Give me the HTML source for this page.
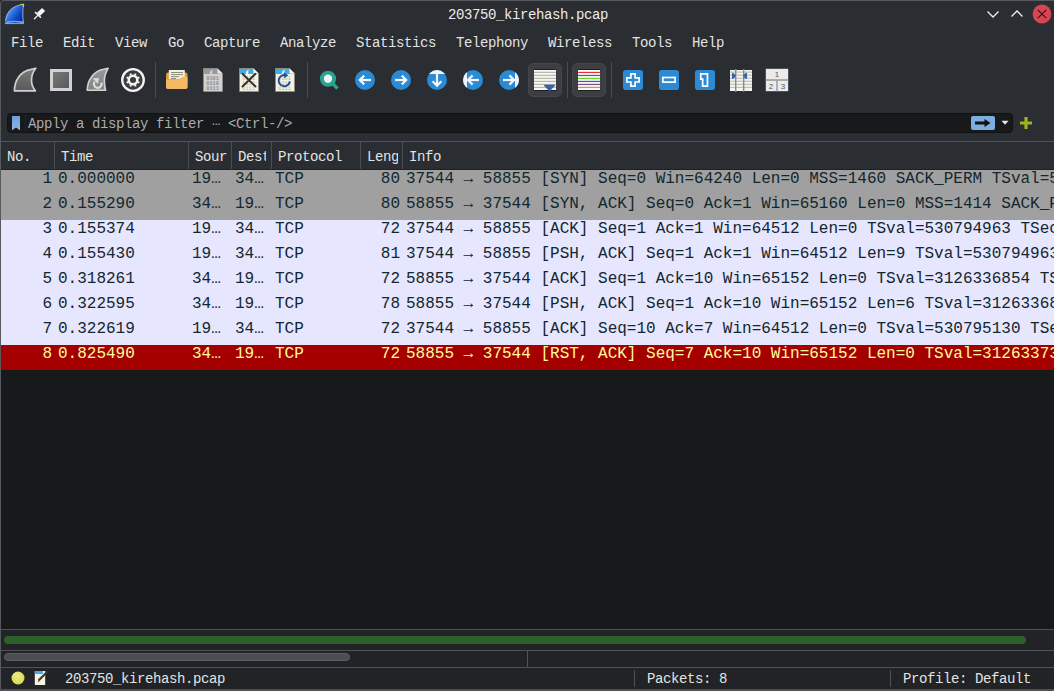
<!DOCTYPE html>
<html><head><meta charset="utf-8"><style>
*{margin:0;padding:0;box-sizing:border-box}
html,body{width:1054px;height:691px;overflow:hidden;background:#2a2d31}
body{position:relative;font-family:"Liberation Mono",monospace;font-size:14px;letter-spacing:-0.4px;color:#e3e3e3}
.a{position:absolute;display:block}
.t{position:absolute;white-space:pre;line-height:16px}
.hsep{position:absolute;top:142px;width:1px;height:27px;background:#4a4d52}
.row{position:absolute;left:1px;width:1053px;height:25px;font-size:16px;letter-spacing:0;line-height:20px;white-space:pre;overflow:hidden}
.row span{position:absolute;top:-1px}
.r1{background:#a0a0a0;color:#12272e}
.r2{background:#e7e6ff;color:#12272e}
.r3{background:#a40000;color:#fffc9c}
</style></head><body>
<div class="a" style="left:0;top:0;width:1060px;height:700px;border:1px solid #56595d;border-radius:4px 4px 0 0;background:#2a2d31"></div>
<svg class="a" style="left:4px;top:3px" width="22" height="22" viewBox="0 0 22 22" ><defs><linearGradient id="sg" x1="0.1" y1="0.2" x2="0.9" y2="0.8"><stop offset="0" stop-color="#7ab8ff"/><stop offset="0.35" stop-color="#2f78e8"/><stop offset="0.75" stop-color="#0a42b8"/><stop offset="1" stop-color="#08389e"/></linearGradient></defs>
<path d="M1.3 20.6 C1.4 10.5 6.5 3 19.6 1.2 C18.6 6.5 18.4 13 19.6 20.6 Z" fill="url(#sg)" stroke="#c8d8f0" stroke-width="0.7"/>
<path d="M2.4 19.4 Q10 17.6 19 19.4" stroke="#7f9fdf" stroke-width="1.6" fill="none"/>
<path d="M16.6 1.5 L19.7 1.3 L19.5 4" stroke="#e8e020" stroke-width="1" fill="none"/>
<path d="M1.4 17.8 L1.6 19.6" stroke="#e02020" stroke-width="1"/></svg>
<svg class="a" style="left:32px;top:6px" width="16" height="16" viewBox="0 0 16 16" ><g stroke="#f4f4f4" stroke-linecap="round" fill="none">
<path d="M6.4 8.6 L11.6 3.4" stroke-width="4.3" stroke-linecap="butt"/>
<path d="M3.4 6.4 L8.5 11.3" stroke-width="1.5"/>
<path d="M5.6 9.6 L2.4 12.8" stroke-width="1.3"/></g></svg>
<div class="t" style="left:1px;width:1054px;text-align:center;top:7px;color:#ececec">203750_kirehash.pcap</div>
<svg class="a" style="left:984px;top:6px" width="18" height="16" viewBox="0 0 18 16" ><path d="M3.5 5.5 L9 11 L14.5 5.5" stroke="#f0f0f0" stroke-width="1.3" fill="none"/></svg>
<svg class="a" style="left:1008px;top:6px" width="18" height="16" viewBox="0 0 18 16" ><path d="M3.5 10.5 L9 5 L14.5 10.5" stroke="#f0f0f0" stroke-width="1.3" fill="none"/></svg>
<svg class="a" style="left:1030px;top:3px" width="24" height="22" viewBox="0 0 24 22" ><circle cx="12" cy="11" r="9.4" fill="#da4453"/><path d="M7.8 6.8 L16.2 15.2 M16.2 6.8 L7.8 15.2" stroke="#2a1a1e" stroke-width="1.2"/></svg>
<div class="t" style="left:11px;top:35px">File</div>
<div class="t" style="left:63px;top:35px">Edit</div>
<div class="t" style="left:115px;top:35px">View</div>
<div class="t" style="left:168px;top:35px">Go</div>
<div class="t" style="left:204px;top:35px">Capture</div>
<div class="t" style="left:280px;top:35px">Analyze</div>
<div class="t" style="left:356px;top:35px">Statistics</div>
<div class="t" style="left:456px;top:35px">Telephony</div>
<div class="t" style="left:548px;top:35px">Wireless</div>
<div class="t" style="left:632px;top:35px">Tools</div>
<div class="t" style="left:692px;top:35px">Help</div>
<svg class="a" style="left:13px;top:67px" width="24" height="25" viewBox="0 0 24 25" ><defs><linearGradient id="fg1" x1="0" y1="0" x2="0" y2="1"><stop offset="0" stop-color="#7a7a7a"/><stop offset="1" stop-color="#5a5a5a"/></linearGradient></defs><path d="M1.4 23.8 C1.6 13.5 7 4.5 18.2 2.4 L22.8 1.2 C19.4 5.5 18.4 9.5 18.5 13.5 C18.6 17.5 20 21 22.4 23.8 Z" fill="url(#fg1)" stroke="#cfcfcf" stroke-width="1.7" stroke-linejoin="round"/></svg>
<svg class="a" style="left:50px;top:69px" width="22" height="22" viewBox="0 0 22 22" ><defs><linearGradient id="stg" x1="0" y1="0" x2="1" y2="1"><stop offset="0" stop-color="#7a7a7a"/><stop offset="1" stop-color="#585858"/></linearGradient></defs><rect x="1.5" y="1.5" width="19" height="19" fill="url(#stg)" stroke="#d2d2d6" stroke-width="3"/></svg>
<svg class="a" style="left:85px;top:67px" width="24" height="25" viewBox="0 0 24 25" ><defs><linearGradient id="fg2" x1="0" y1="0" x2="0" y2="1"><stop offset="0" stop-color="#9a9a9a"/><stop offset="1" stop-color="#828282"/></linearGradient></defs><path d="M2.2 23.3 C2.4 13.5 8 4.5 18.5 2.3 L23.2 1.2 C20.5 6 19.3 10 19.4 14 C19.5 18 19.8 21 20.6 23.3 Z" fill="url(#fg2)" stroke="#d2d2d2" stroke-width="1.6" stroke-linejoin="round"/><path d="M9.6 14.6 A3.9 3.9 0 1 0 16.4 15.6" stroke="#dcdcdc" stroke-width="2.3" fill="none"/><path d="M7.6 11.4 L14 10.9 L13 17 Z" fill="#dcdcdc"/></svg>
<svg class="a" style="left:121px;top:68px" width="24" height="24" viewBox="0 0 24 24" ><circle cx="12" cy="12" r="10.8" fill="#3c3c3c" stroke="#f4f4f4" stroke-width="2.3"/><rect x="11.05" y="5" width="1.9" height="1.9" rx="0.3" fill="#f4f4f4" transform="rotate(22.5 12 12)"/><rect x="11.05" y="5" width="1.9" height="1.9" rx="0.3" fill="#f4f4f4" transform="rotate(67.5 12 12)"/><rect x="11.05" y="5" width="1.9" height="1.9" rx="0.3" fill="#f4f4f4" transform="rotate(112.5 12 12)"/><rect x="11.05" y="5" width="1.9" height="1.9" rx="0.3" fill="#f4f4f4" transform="rotate(157.5 12 12)"/><rect x="11.05" y="5" width="1.9" height="1.9" rx="0.3" fill="#f4f4f4" transform="rotate(202.5 12 12)"/><rect x="11.05" y="5" width="1.9" height="1.9" rx="0.3" fill="#f4f4f4" transform="rotate(247.5 12 12)"/><rect x="11.05" y="5" width="1.9" height="1.9" rx="0.3" fill="#f4f4f4" transform="rotate(292.5 12 12)"/><rect x="11.05" y="5" width="1.9" height="1.9" rx="0.3" fill="#f4f4f4" transform="rotate(337.5 12 12)"/><circle cx="12" cy="12" r="4.3" fill="none" stroke="#f4f4f4" stroke-width="2.5"/></svg>
<div class="a" style="left:155px;top:62px;width:1px;height:36px;background:#4a4d52"></div>
<div class="a" style="left:307px;top:62px;width:1px;height:36px;background:#4a4d52"></div>
<div class="a" style="left:567px;top:62px;width:1px;height:36px;background:#4a4d52"></div>
<div class="a" style="left:611px;top:62px;width:1px;height:36px;background:#4a4d52"></div>
<svg class="a" style="left:165px;top:69px" width="24" height="21" viewBox="0 0 24 21" ><path d="M1 5.5 Q1 3.5 3 3.5 L20.5 3.5 Q22.5 3.5 22.5 5.5 L22.5 18 Q22.5 20 20.5 20 L3 20 Q1 20 1 18 Z" fill="#e49a3a"/>
<rect x="3.8" y="1" width="16" height="9" fill="#f2f0de"/>
<g stroke="#8a8a7a" stroke-width="1"><path d="M6 3.5 H18 M6 5.6 H18 M6 7.7 H14 M6 9.6 H11"/></g>
<path d="M1 10.6 L11 10.6 Q14 10.6 15.5 9 Q17 7.4 19 7.4 L21 7.4 Q22.5 7.4 22.5 9 L22.5 18 Q22.5 20 20.5 20 L3 20 Q1 20 1 18 Z" fill="#f2b962"/></svg>
<svg class="a" style="left:203px;top:68px" width="20" height="24" viewBox="0 0 20 24" ><path d="M0.5 0.5 L14.5 0.5 L19.5 5.5 L19.5 23.5 L0.5 23.5 Z" fill="#cfd1d5" stroke="#8c8c84" stroke-width="0.8"/>
<path d="M1 1 L14.3 1 L19 5.7 L19 6 L1 6 Z" fill="#9a9a9a"/>
<path d="M14.5 0.5 L14.5 5.5 L19.5 5.5 Z" fill="#e8e8e8"/>
<path d="M7 6 C6.5 3.5 8.5 1.8 10 1.5 C9 3 9 4.5 9.5 6 Z" fill="#cfd1d5"/>
<g font-family="Liberation Mono" font-size="5.2" font-weight="bold" fill="#8c8c8c" letter-spacing="0"><text x="3.3" y="11.5">0101</text><text x="3.3" y="16.5">0110</text><text x="3.3" y="21.5">0111</text></g></svg>
<svg class="a" style="left:239px;top:68px" width="20" height="24" viewBox="0 0 20 24" ><path d="M0.5 0.5 L14.5 0.5 L19.5 5.5 L19.5 23.5 L0.5 23.5 Z" fill="#f4f2e2" stroke="#8c8c84" stroke-width="0.8"/>
<path d="M1 1 L14.3 1 L19 5.7 L19 6 L1 6 Z" fill="#3daee9"/>
<path d="M14.5 0.5 L14.5 5.5 L19.5 5.5 Z" fill="#ffffff"/>
<path d="M7 6 C6.5 3.5 8.5 1.8 10 1.5 C9 3 9 4.5 9.5 6 Z" fill="#f4f2e2"/>
<g font-family="Liberation Mono" font-size="5.2" font-weight="normal" fill="#b4b4ac" letter-spacing="0"><text x="3.3" y="11.5">0101</text><text x="3.3" y="16.5">0110</text><text x="3.3" y="21.5">0111</text></g><path d="M3.5 5.8 L16.5 18.5 M16.5 5.8 L3.5 18.5" stroke="#303030" stroke-width="1.9" stroke-linecap="round"/></svg>
<svg class="a" style="left:275px;top:68px" width="20" height="24" viewBox="0 0 20 24" ><path d="M0.5 0.5 L14.5 0.5 L19.5 5.5 L19.5 23.5 L0.5 23.5 Z" fill="#f4f2e2" stroke="#8c8c84" stroke-width="0.8"/>
<path d="M1 1 L14.3 1 L19 5.7 L19 6 L1 6 Z" fill="#3daee9"/>
<path d="M14.5 0.5 L14.5 5.5 L19.5 5.5 Z" fill="#ffffff"/>
<path d="M7 6 C6.5 3.5 8.5 1.8 10 1.5 C9 3 9 4.5 9.5 6 Z" fill="#f4f2e2"/>
<g font-family="Liberation Mono" font-size="5.2" font-weight="normal" fill="#b4b4ac" letter-spacing="0"><text x="3.3" y="11.5">0101</text><text x="3.3" y="16.5">0110</text><text x="3.3" y="21.5">0111</text></g><path d="M14.8 13.5 A5.6 5.6 0 1 1 10.5 7.2" stroke="#1b4f9c" stroke-width="1.9" fill="none"/><path d="M8.8 4.6 L13.3 7.3 L9.3 10.2 Z" fill="#1b4f9c"/></svg>
<svg class="a" style="left:318px;top:69px" width="22" height="22" viewBox="0 0 22 22" ><path d="M15 15 L19.5 19.5" stroke="#2ba393" stroke-width="3.2" stroke-linecap="butt"/><circle cx="10" cy="9.7" r="6.1" fill="#eaf4f2" stroke="#2ba393" stroke-width="3.9"/></svg>
<svg class="a" style="left:354px;top:69px" width="22" height="22" viewBox="0 0 22 22" ><circle cx="11" cy="11" r="10" fill="#2b8ad4"/><path d="M5.8 11 H17" stroke="#f2f6fa" stroke-width="2.2"/><path d="M10.2 6.6 L5.8 11 L10.2 15.4" stroke="#f2f6fa" stroke-width="2.2" fill="none"/></svg>
<svg class="a" style="left:390px;top:69px" width="22" height="22" viewBox="0 0 22 22" ><circle cx="11" cy="11" r="10" fill="#2b8ad4"/><path d="M5 11 H16.2" stroke="#f2f6fa" stroke-width="2.2"/><path d="M11.8 6.6 L16.2 11 L11.8 15.4" stroke="#f2f6fa" stroke-width="2.2" fill="none"/></svg>
<svg class="a" style="left:426px;top:69px" width="22" height="22" viewBox="0 0 22 22" ><defs><clipPath id="c1"><circle cx="11" cy="11" r="10"/></clipPath></defs><circle cx="11" cy="11" r="10" fill="#2b8ad4"/><rect x="0" y="0" width="22" height="5" fill="#eef4fa" clip-path="url(#c1)"/><path d="M11 5 V16.5" stroke="#f2f6fa" stroke-width="2.2"/><path d="M6.6 12.2 L11 16.6 L15.4 12.2" stroke="#f2f6fa" stroke-width="2.2" fill="none"/></svg>
<svg class="a" style="left:462px;top:69px" width="22" height="22" viewBox="0 0 22 22" ><defs><clipPath id="c2"><circle cx="11" cy="11" r="10"/></clipPath></defs><circle cx="11" cy="11" r="10" fill="#2b8ad4"/><rect x="0" y="0" width="5" height="22" fill="#eef4fa" clip-path="url(#c2)"/><path d="M6 11 H17" stroke="#f2f6fa" stroke-width="2.2"/><path d="M10.6 6.4 L6 11 L10.6 15.6" stroke="#f2f6fa" stroke-width="2.3" fill="none"/></svg>
<svg class="a" style="left:498px;top:69px" width="22" height="22" viewBox="0 0 22 22" ><defs><clipPath id="c3"><circle cx="11" cy="11" r="10"/></clipPath></defs><circle cx="11" cy="11" r="10" fill="#2b8ad4"/><rect x="17" y="0" width="5" height="22" fill="#eef4fa" clip-path="url(#c3)"/><path d="M5 11 H16" stroke="#f2f6fa" stroke-width="2.2"/><path d="M11.4 6.4 L16 11 L11.4 15.6" stroke="#f2f6fa" stroke-width="2.3" fill="none"/></svg>
<div class="a" style="left:528px;top:63px;width:34px;height:34px;border-radius:5px;background:#3c3e43;border:1px solid #44464b"></div>
<div class="a" style="left:572px;top:63px;width:34px;height:34px;border-radius:5px;background:#3c3e43;border:1px solid #44464b"></div>
<svg class="a" style="left:533px;top:69px" width="24" height="23" viewBox="0 0 24 23" ><rect x="1" y="0.8" width="22" height="20.4" fill="#f6f6f2"/><rect x="1" y="0" width="22" height="1" fill="#1e1f20"/><rect x="1" y="21" width="22" height="1" fill="#1e1f20"/><rect x="1" y="2.80" width="22" height="1.1" fill="#b3b3a6"/><rect x="1" y="5.82" width="22" height="1.1" fill="#b3b3a6"/><rect x="1" y="8.84" width="22" height="1.1" fill="#b3b3a6"/><rect x="1" y="11.86" width="22" height="1.1" fill="#b3b3a6"/><rect x="1" y="14.88" width="22" height="1.1" fill="#b3b3a6"/><rect x="1" y="17.90" width="22" height="1.1" fill="#b3b3a6"/><path d="M11.6 16.4 L21.4 16.4 L16.5 21.6 Z" fill="#3465b0" stroke="#3465b0" stroke-width="1.3" stroke-linejoin="round"/></svg>
<svg class="a" style="left:577px;top:69px" width="24" height="23" viewBox="0 0 24 23" ><rect x="1" y="0.8" width="22" height="20.4" fill="#f8fafa"/><rect x="1" y="0" width="22" height="1" fill="#1e1f20"/><rect x="1" y="21" width="22" height="1" fill="#1e1f20"/><rect x="1" y="2.85" width="22" height="1.2" fill="#e83232"/><rect x="1" y="5.85" width="22" height="1.2" fill="#3565b0"/><rect x="1" y="8.85" width="22" height="1.2" fill="#70d020"/><rect x="1" y="11.85" width="22" height="1.2" fill="#3565b0"/><rect x="1" y="14.85" width="22" height="1.2" fill="#804a90"/><rect x="1" y="17.85" width="22" height="1.2" fill="#c8a010"/></svg>
<svg class="a" style="left:623px;top:70px" width="20" height="20" viewBox="0 0 20 20" ><rect x="0" y="0" width="20" height="20" rx="2.8" fill="#2c8ad5"/><path d="M7.9 3.8 H12.1 V7.9 H16.1 V12 H12.1 V16.1 H7.9 V12 H3.8 V7.9 H7.9 Z" fill="none" stroke="#fff" stroke-width="1.7"/></svg>
<svg class="a" style="left:659px;top:70px" width="20" height="20" viewBox="0 0 20 20" ><rect x="0" y="0" width="20" height="20" rx="2.8" fill="#2c8ad5"/><rect x="3.8" y="7.5" width="12.3" height="4.6" fill="none" stroke="#fff" stroke-width="1.7"/></svg>
<svg class="a" style="left:695px;top:70px" width="20" height="20" viewBox="0 0 20 20" ><rect x="0" y="0" width="20" height="20" rx="2.8" fill="#2c8ad5"/><path d="M5.75 3.85 H12.45 V16.05 H7.65 V9.15 H5.75 Z" fill="none" stroke="#fff" stroke-width="1.7"/></svg>
<svg class="a" style="left:730px;top:69px" width="22" height="23" viewBox="0 0 22 23" ><rect x="0" y="1" width="22" height="21" fill="#f4f4f0"/><rect x="0" y="2.60" width="22" height="1" fill="#b8b8aa"/><rect x="0" y="5.65" width="22" height="1" fill="#b8b8aa"/><rect x="0" y="8.70" width="22" height="1" fill="#b8b8aa"/><rect x="0" y="11.75" width="22" height="1" fill="#b8b8aa"/><rect x="0" y="14.80" width="22" height="1" fill="#b8b8aa"/><rect x="0" y="17.85" width="22" height="1" fill="#b8b8aa"/><rect x="5" y="0" width="1.4" height="23" fill="#8a8a84"/><rect x="13" y="0" width="1.4" height="23" fill="#8a8a84"/><path d="M2.6 4.3 L5.4 6.8 L2.6 9.4 Z" fill="#3565b0" stroke="#3565b0" stroke-width="1.3" stroke-linejoin="round"/><path d="M16.4 4.3 L13.6 6.8 L16.4 9.4 Z" fill="#3565b0" stroke="#3565b0" stroke-width="1.3" stroke-linejoin="round"/></svg>
<svg class="a" style="left:765px;top:68px" width="24" height="24" viewBox="0 0 24 24" ><rect x="0.8" y="0.8" width="22.4" height="22.4" fill="#ebebeb"/><rect x="0.8" y="11.2" width="22.4" height="1.6" fill="#9c9c9c"/><rect x="11.3" y="12" width="1.5" height="11.2" fill="#9c9c9c"/><g font-family="Liberation Sans" font-size="8" fill="#555" text-anchor="middle" letter-spacing="0"><text x="12" y="9">1</text><text x="6" y="20.6">2</text><text x="18" y="20.6">3</text></g></svg>
<div class="a" style="left:7px;top:113px;width:1006px;height:20px;background:#18191b;border:1px solid #111213;border-radius:4px"></div>
<div class="a" style="left:25px;top:114px;width:1px;height:18px;background:#202224"></div>
<svg class="a" style="left:11px;top:115px" width="10" height="16" viewBox="0 0 10 16" ><defs><linearGradient id="bm" x1="0" y1="0" x2="0" y2="1"><stop offset="0" stop-color="#6e9ed8"/><stop offset="1" stop-color="#8cb8e8"/></linearGradient></defs><path d="M1 1 H9 V15.2 L5 12.6 L1 15.2 Z" fill="url(#bm)"/></svg>
<div class="t" style="left:28px;top:116px;color:#ababab">Apply a display filter <span style="position:relative;top:-3px">…</span> &lt;Ctrl-/&gt;</div>
<svg class="a" style="left:971px;top:116px" width="24" height="14" viewBox="0 0 24 14" ><rect x="0" y="0" width="24" height="14" rx="2" fill="#7eaee0"/><path d="M4 7 H15" stroke="#111" stroke-width="3"/><path d="M13.5 3 L19.5 7 L13.5 11 Z" fill="#111"/></svg>
<svg class="a" style="left:1001px;top:120px" width="8" height="6" viewBox="0 0 8 6" ><path d="M0.5 0.8 L7.5 0.8 L4 4.8 Z" fill="#e8e8e8"/></svg>
<svg class="a" style="left:1019px;top:116px" width="14" height="14" viewBox="0 0 14 14" ><path d="M7 1 V13 M1 7 H13" stroke="#a0b41e" stroke-width="3.2"/></svg>
<div class="a" style="left:1px;top:141px;width:1053px;height:1px;background:#505357"></div>
<div class="hsep" style="left:54px"></div>
<div class="hsep" style="left:188px"></div>
<div class="hsep" style="left:231px"></div>
<div class="hsep" style="left:271px"></div>
<div class="hsep" style="left:360px"></div>
<div class="hsep" style="left:402px"></div>
<div class="a" style="left:1px;top:169px;width:1053px;height:1px;background:#1f2124"></div>
<div class="t" style="left:7px;top:149px;">No.</div>
<div class="t" style="left:61px;top:149px;">Time</div>
<div class="t" style="left:195px;top:149px;width:32px;overflow:hidden;">Source</div>
<div class="t" style="left:238px;top:149px;width:28px;overflow:hidden;">Destination</div>
<div class="t" style="left:278px;top:149px;">Protocol</div>
<div class="t" style="left:367px;top:149px;width:31px;overflow:hidden;">Length</div>
<div class="t" style="left:409px;top:149px;">Info</div>
<div class="a" style="left:1px;top:370px;width:1053px;height:259px;background:#18191b"></div>
<div class="row r1" style="top:170px"><span style="left:10px;width:41px;text-align:right">1</span><span style="left:57px">0.000000</span><span style="left:191px">19…</span><span style="left:234px">34…</span><span style="left:274px">TCP</span><span style="left:350px;width:49px;text-align:right">80</span><span style="left:405px">37544 → 58855 [SYN] Seq=0 Win=64240 Len=0 MSS=1460 SACK_PERM TSval=530794808 TSecr=0 WS=128</span></div>
<div class="row r1" style="top:195px"><span style="left:10px;width:41px;text-align:right">2</span><span style="left:57px">0.155290</span><span style="left:191px">34…</span><span style="left:234px">19…</span><span style="left:274px">TCP</span><span style="left:350px;width:49px;text-align:right">80</span><span style="left:405px">58855 → 37544 [SYN, ACK] Seq=0 Ack=1 Win=65160 Len=0 MSS=1414 SACK_PERM TSval=3126336690</span></div>
<div class="row r2" style="top:220px"><span style="left:10px;width:41px;text-align:right">3</span><span style="left:57px">0.155374</span><span style="left:191px">19…</span><span style="left:234px">34…</span><span style="left:274px">TCP</span><span style="left:350px;width:49px;text-align:right">72</span><span style="left:405px">37544 → 58855 [ACK] Seq=1 Ack=1 Win=64512 Len=0 TSval=530794963 TSecr=3126336690</span></div>
<div class="row r2" style="top:245px"><span style="left:10px;width:41px;text-align:right">4</span><span style="left:57px">0.155430</span><span style="left:191px">19…</span><span style="left:234px">34…</span><span style="left:274px">TCP</span><span style="left:350px;width:49px;text-align:right">81</span><span style="left:405px">37544 → 58855 [PSH, ACK] Seq=1 Ack=1 Win=64512 Len=9 TSval=530794963 TSecr=3126336690</span></div>
<div class="row r2" style="top:270px"><span style="left:10px;width:41px;text-align:right">5</span><span style="left:57px">0.318261</span><span style="left:191px">34…</span><span style="left:234px">19…</span><span style="left:274px">TCP</span><span style="left:350px;width:49px;text-align:right">72</span><span style="left:405px">58855 → 37544 [ACK] Seq=1 Ack=10 Win=65152 Len=0 TSval=3126336854 TSecr=530794963</span></div>
<div class="row r2" style="top:295px"><span style="left:10px;width:41px;text-align:right">6</span><span style="left:57px">0.322595</span><span style="left:191px">34…</span><span style="left:234px">19…</span><span style="left:274px">TCP</span><span style="left:350px;width:49px;text-align:right">78</span><span style="left:405px">58855 → 37544 [PSH, ACK] Seq=1 Ack=10 Win=65152 Len=6 TSval=3126336858 TSecr=530794963</span></div>
<div class="row r2" style="top:320px"><span style="left:10px;width:41px;text-align:right">7</span><span style="left:57px">0.322619</span><span style="left:191px">19…</span><span style="left:234px">34…</span><span style="left:274px">TCP</span><span style="left:350px;width:49px;text-align:right">72</span><span style="left:405px">37544 → 58855 [ACK] Seq=10 Ack=7 Win=64512 Len=0 TSval=530795130 TSecr=3126336858</span></div>
<div class="row r3" style="top:345px"><span style="left:10px;width:41px;text-align:right">8</span><span style="left:57px">0.825490</span><span style="left:191px">34…</span><span style="left:234px">19…</span><span style="left:274px">TCP</span><span style="left:350px;width:49px;text-align:right">72</span><span style="left:405px">58855 → 37544 [RST, ACK] Seq=7 Ack=10 Win=65152 Len=0 TSval=3126337361 TSecr=530795130</span></div>
<div class="a" style="left:1px;top:629px;width:1053px;height:1px;background:#4f5256"></div>
<div class="a" style="left:1px;top:630px;width:1053px;height:20px;background:#212326"></div>
<div class="a" style="left:4px;top:636px;width:1022px;height:8px;border-radius:4px;background:#2d5f2a"></div>
<div class="a" style="left:1px;top:650px;width:1053px;height:1px;background:#4f5256"></div>
<div class="a" style="left:1px;top:651px;width:1053px;height:16px;background:#212326"></div>
<div class="a" style="left:4px;top:653px;width:346px;height:8px;border-radius:4px;background:#4a4d51;border:1px solid #5c5f63"></div>
<div class="a" style="left:527px;top:651px;width:1px;height:16px;background:#4f5256"></div>
<div class="a" style="left:1px;top:667px;width:1053px;height:1px;background:#4f5256"></div>
<div class="a" style="left:1px;top:668px;width:1053px;height:22px;background:#212326"></div>
<div class="a" style="left:0;top:689px;width:1054px;height:2px;background:#4d5054"></div>
<svg class="a" style="left:11px;top:671px" width="14" height="14" viewBox="0 0 14 14" ><defs><radialGradient id="yg" cx="0.45" cy="0.35" r="0.7"><stop offset="0" stop-color="#ecea8a"/><stop offset="1" stop-color="#d8d64a"/></radialGradient></defs><circle cx="7" cy="7" r="6.5" fill="url(#yg)"/></svg>
<svg class="a" style="left:34px;top:670px" width="15" height="16" viewBox="0 0 15 16" ><rect x="0.8" y="1" width="10.4" height="14" fill="#f4f2e2"/><rect x="0.8" y="1" width="8" height="3" fill="#3daee9"/><path d="M4.5 10.5 L13.5 1.5" stroke="#3a3a3a" stroke-width="2.2"/><path d="M4.6 10.4 L3.6 12 L5.4 11.2 Z" fill="#111"/></svg>
<div class="t" style="left:65px;top:671px">203750_kirehash.pcap</div>
<div class="a" style="left:634px;top:670px;width:1px;height:17px;background:#4f5256"></div>
<div class="t" style="left:647px;top:671px">Packets: 8</div>
<div class="a" style="left:890px;top:670px;width:1px;height:17px;background:#4f5256"></div>
<div class="t" style="left:903px;top:671px">Profile: Default</div>
</body></html>
